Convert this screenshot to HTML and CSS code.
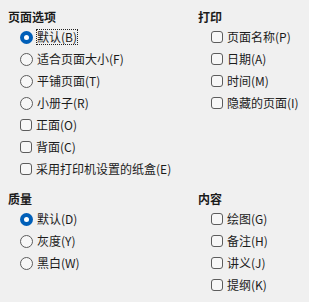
FILE: index.html
```html
<!DOCTYPE html>
<html lang="zh-CN">
<head>
<meta charset="utf-8">
<link rel="stylesheet" href="styles.css">
</head>
<body>
<div class="panel">
  <section class="group">
    <div class="group-title">页面选项</div>
    <ul class="options">
      <li class="opt"><span class="radio checked"></span><span class="label focus">默认(B)</span></li>
      <li class="opt"><span class="radio"></span><span class="label">适合页面大小(F)</span></li>
      <li class="opt"><span class="radio"></span><span class="label">平铺页面(T)</span></li>
      <li class="opt"><span class="radio"></span><span class="label">小册子(R)</span></li>
      <li class="opt"><span class="check"></span><span class="label">正面(O)</span></li>
      <li class="opt"><span class="check"></span><span class="label">背面(C)</span></li>
      <li class="opt"><span class="check"></span><span class="label">采用打印机设置的纸盒(E)</span></li>
    </ul>
  </section>
  <section class="group group-right">
    <div class="group-title">打印</div>
    <ul class="options">
      <li class="opt"><span class="check"></span><span class="label">页面名称(P)</span></li>
      <li class="opt"><span class="check"></span><span class="label">日期(A)</span></li>
      <li class="opt"><span class="check"></span><span class="label">时间(M)</span></li>
      <li class="opt"><span class="check"></span><span class="label">隐藏的页面(I)</span></li>
    </ul>
  </section>
  <section class="group">
    <div class="group-title">质量</div>
    <ul class="options">
      <li class="opt"><span class="radio checked"></span><span class="label">默认(D)</span></li>
      <li class="opt"><span class="radio"></span><span class="label">灰度(Y)</span></li>
      <li class="opt"><span class="radio"></span><span class="label">黑白(W)</span></li>
    </ul>
  </section>
  <section class="group group-right">
    <div class="group-title">内容</div>
    <ul class="options">
      <li class="opt"><span class="check"></span><span class="label">绘图(G)</span></li>
      <li class="opt"><span class="check"></span><span class="label">备注(H)</span></li>
      <li class="opt"><span class="check"></span><span class="label">讲义(J)</span></li>
      <li class="opt"><span class="check"></span><span class="label">提纲(K)</span></li>
    </ul>
  </section>
</div>
</body>
</html>
```
FILE: styles.css
```css
html, body {
  margin: 0;
  padding: 0;
  background: #f0f0f0;
}
body {
  width: 309px;
  height: 302px;
  overflow: hidden;
  font-family: "Noto Sans CJK SC", "Noto Sans", sans-serif;
  font-size: 12px;
  color: #1b1b1b;
}
.panel {
  display: grid;
  grid-template-columns: 190px 1fr;
  grid-template-rows: auto auto;
  row-gap: 11px;
  padding: 9px 0 0 8px;
}
.group-title {
  height: 16px;
  line-height: 16px;
  font-weight: bold;
  margin-bottom: 1px;
}
.options {
  list-style: none;
  margin: 0;
  padding: 0 0 0 12px;
}
.group-right .options {
  padding-left: 13px;
}
.opt {
  height: 22px;
  display: flex;
  align-items: center;
  gap: 4px;
  white-space: nowrap;
}
.label {
  line-height: 14px;
  border: 1px dotted transparent;
  margin-left: -1px;
}
.label.focus {
  border-color: #222;
}
.radio {
  box-sizing: border-box;
  width: 13px;
  height: 13px;
  border-radius: 50%;
  border: 1px solid #5c5c5c;
  background: #f7f7f7;
  flex: none;
  position: relative;
}
.radio.checked {
  border: none;
  background: #005fb8;
}
.radio.checked::after {
  content: "";
  position: absolute;
  left: 4px;
  top: 4px;
  width: 5px;
  height: 5px;
  border-radius: 50%;
  background: #fff;
}
.check {
  box-sizing: border-box;
  width: 12px;
  height: 12px;
  border-radius: 3px;
  border: 1px solid #5c5c5c;
  background: #f7f7f7;
  flex: none;
}
```
